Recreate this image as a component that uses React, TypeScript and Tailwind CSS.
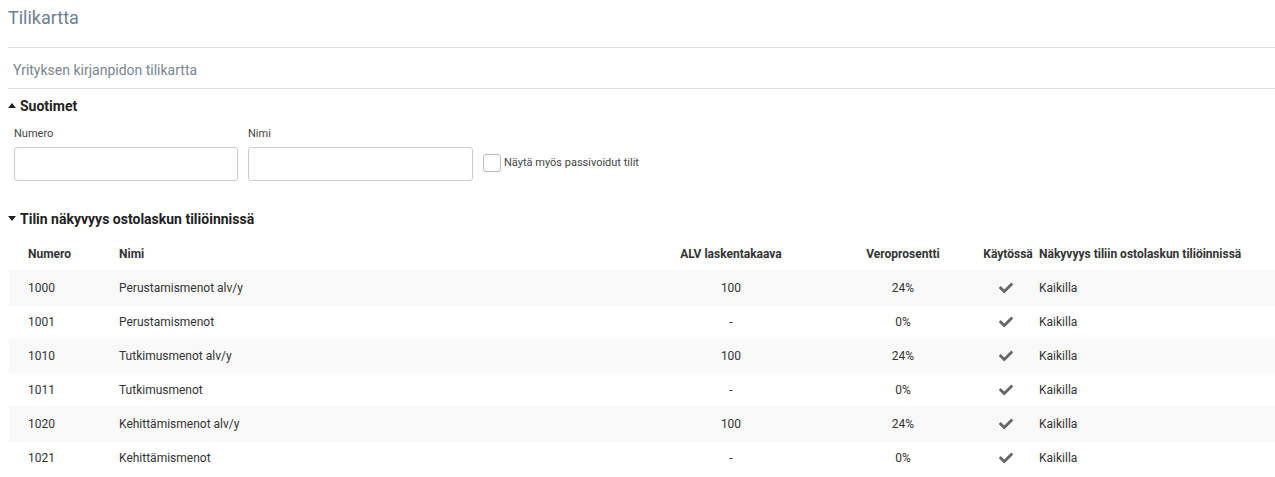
import React from "react";
import { FaCheck } from "react-icons/fa";

interface Account {
  number: string
  name: string
  formula: string
  rate: string
}

const accounts: Account[] = [
  { number: "1000", name: "Perustamismenot alv/y", formula: "100", rate: "24%" },
  { number: "1001", name: "Perustamismenot", formula: "-", rate: "0%" },
  { number: "1010", name: "Tutkimusmenot alv/y", formula: "100", rate: "24%" },
  { number: "1011", name: "Tutkimusmenot", formula: "-", rate: "0%" },
  { number: "1020", name: "Kehittämismenot alv/y", formula: "100", rate: "24%" },
  { number: "1021", name: "Kehittämismenot", formula: "-", rate: "0%" },
];

const CaretUp = () => (
  <span className="inline-block w-0 h-0 border-l-[4px] border-r-[4px] border-b-[5px] border-l-transparent border-r-transparent border-b-[#222] mr-[4px] mb-[2px]" />
)

const CaretDown = () => (
  <span className="inline-block w-0 h-0 border-l-[4px] border-r-[4px] border-t-[5px] border-l-transparent border-r-transparent border-t-[#222] mr-[4px] mb-[2px]" />
)

export default function App() {
  return (
    <div className="w-[1275px] h-[477px] bg-white overflow-hidden font-['Roboto',sans-serif] text-[#333]">
      <div className="pl-[8px]">
        <h1 className="h-[48px] pt-[6px] text-[18px] leading-[24px] text-[#6c8193] border-b border-[#dedede]">Tilikartta</h1>
        <div className="h-[41px] flex items-center pt-[4px] pl-[5px] text-[14px] text-[#788692] border-b border-[#dedede]">
          Yrityksen kirjanpidon tilikartta
        </div>
        <div className="h-[34px] flex items-center text-[14px] font-bold text-[#222]">
          <CaretUp />
          Suotimet
        </div>

        <div className="flex items-end pl-[6px] gap-[10px] mt-[4px]">
          <div className="flex flex-col">
            <label className="text-[11px] text-[#444] leading-[14px] mb-[6px]">Numero</label>
            <input className="w-[224px] h-[34px] border border-[#ccc] rounded-[3px] outline-none" />
          </div>
          <div className="flex flex-col">
            <label className="text-[11px] text-[#444] leading-[14px] mb-[6px]">Nimi</label>
            <input className="w-[225px] h-[34px] border border-[#ccc] rounded-[3px] outline-none" />
          </div>
          <div className="flex items-center h-[34px] pb-[2px]">
            <span className="w-[18px] h-[18px] border border-[#bbb] rounded-[3px] bg-white mr-[3px]" />
            <span className="text-[11px] text-[#444]">Näytä myös passivoidut tilit</span>
          </div>
        </div>

        <div className="h-[34px] mt-[21px] flex items-center text-[14px] font-bold text-[#222]">
          <CaretDown />
          Tilin näkyvyys ostolaskun tiliöinnissä
        </div>
      </div>

      <div className="pl-[9px] text-[12px]">
        <div className="h-[35px] flex items-center font-bold text-[#333]">
          <div className="w-[102px] pl-[19px]">Numero</div>
          <div className="w-[530px] pl-[8px]">Nimi</div>
          <div className="w-[180px] text-center">ALV laskentakaava</div>
          <div className="w-[164px] text-center">Veroprosentti</div>
          <div className="w-[46px] flex justify-center whitespace-nowrap">Käytössä</div>
          <div className="flex-1 pl-[8px] whitespace-nowrap">Näkyvyys tiliin ostolaskun tiliöinnissä</div>
        </div>
        {accounts.map((a, i) => (
          <div key={a.number} className={`h-[34px] flex items-center ${i % 2 === 0 ? "bg-[#f9f9f9]" : "bg-white"}`}>
            <div className="w-[102px] pl-[19px]">{a.number}</div>
            <div className="w-[530px] pl-[8px]">{a.name}</div>
            <div className="w-[180px] text-center">{a.formula}</div>
            <div className="w-[164px] text-center">{a.rate}</div>
            <div className="w-[46px] flex justify-center pr-[4px]">
              <FaCheck className="w-[14px] h-[14px] text-[#666]" />
            </div>
            <div className="flex-1 pl-[8px]">Kaikilla</div>
          </div>
        ))}
      </div>
    </div>
  );
}
